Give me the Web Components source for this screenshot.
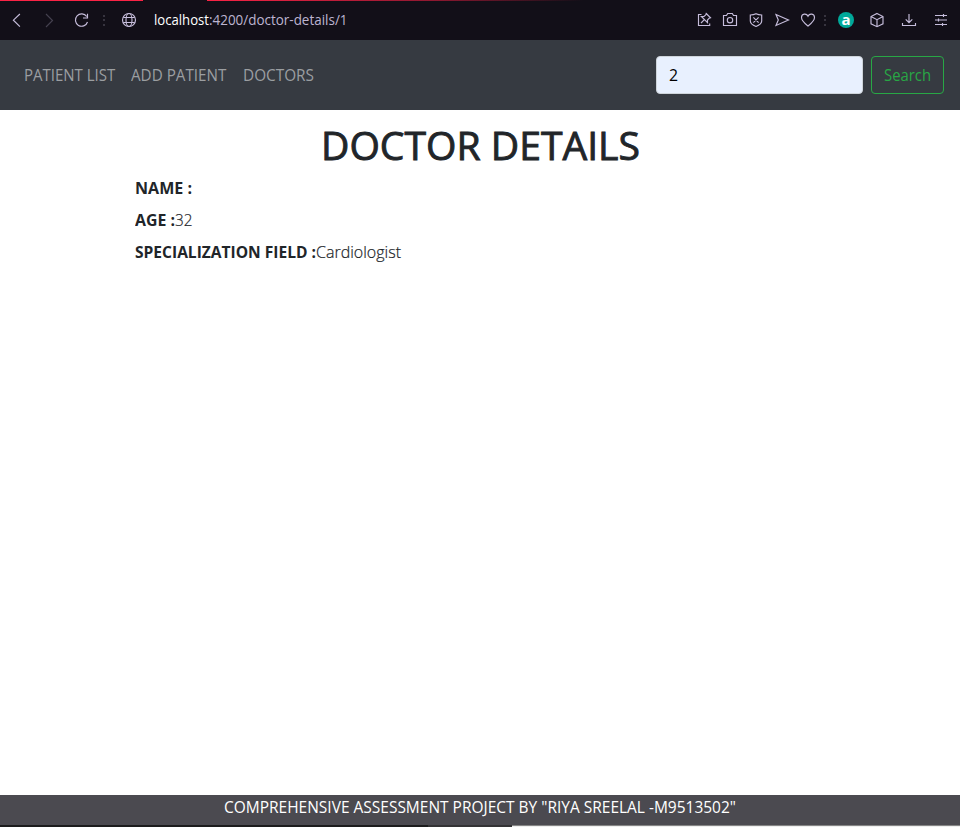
<!DOCTYPE html>
<html lang="en">
<head>
<meta charset="utf-8">
<title>Doctor Details</title>
<style>
html,body{margin:0;height:100%;background:#fff;overflow:hidden}
body{font:400 15.8px/24px "Open Sans","Noto Sans",sans-serif;color:#212529}
</style>
</head>
<body>
<clinic-app></clinic-app>
<script>
const define=(name,html,init)=>customElements.define(name,class extends HTMLElement{
  constructor(){super();this.attachShadow({mode:'open'}).innerHTML=html;}
  connectedCallback(){if(init)init.call(this,this.shadowRoot);}
});

/* A single line of text condensed to the width given in its "w" attribute. */
define('fit-text','<style>:host{display:inline-block;white-space:pre}span{display:inline-block;transform-origin:0 50%}</style><span><slot></slot></span>',function(root){
  const s=root.querySelector('span'),w=+this.getAttribute('w');
  const n=s.getBoundingClientRect().width;
  this.style.width=w+'px';
  if(n)s.style.transform='scaleX('+w/n+')';
});

const icons={
  back:'<path d="M12.9 4 6.400 10.200l6.500 6.500"/>',
  forward:'<path d="M7 4l6.500 6.500L7 17"/>',
  reload:'<path d="M15.700 6.500A6.200 6.200 0 1 0 16.500 12M16.500 3.700v4.300h-4.500"/>',
  globe:'<circle cx="10" cy="10" r="6.500"/><ellipse cx="10" cy="10" rx="3" ry="6.500"/><path d="M4.300 7.500h11.400M4.300 12.500h11.400"/>',
  pin:'<path d="M7.500 4.500h-3v11h11.200V13.500M12.200 3.500l4.300 4.300-1.300.4-1.700 1.800v2.600L7.400 6.500H10l1.800-1.700zM10.400 9.600 7 13"/>',
  camera:'<path d="M3.500 5.500h3l1.200-2h4.600l1.200 2h3v10h-13z"/><circle cx="10" cy="10.200" r="2.700"/>',
  shield:'<path d="M10 3.700c2 .9 3.700 1.200 5.700 1.300v6c0 2.600-2.700 4.300-5.700 5.500-3-1.200-5.700-2.900-5.700-5.500V5c2-.1 3.700-.4 5.700-1.300zM7.400 7.400l5.200 5.200M12.600 7.400l-5.200 5.200"/>',
  send:'<path d="M4 4.500 16.500 10 4 15.500 6.300 10z"/>',
  heart:'<path d="M10 16C7.500 14 3.500 11 3.500 7.500c0-4 5-4.500 6.500-1.300 1.500-3.200 6.500-2.700 6.500 1.300C16.500 11 12.500 14 10 16z"/>',
  cube:'<path d="M10 3.500l6 3v7.300l-6 2.900-6-2.900V6.500zM4 6.500l6 3.200 6-3.200M10 9.700v7"/>',
  download:'<path d="M10 4v8.500M6.700 9.300l3.300 3.400 3.300-3.400M3.500 13v2.500h13V13"/>',
  sliders:'<path d="M4 5.500h12M4 10h12M4 14.500h12M12.500 4v3M7.500 8.500v3M11.500 13v3"/>'
};
define('ui-icon','<style>:host{display:block;width:20px;height:20px;color:#c6bddb}svg{display:block}</style><svg width="20" height="20" viewBox="0 0 20 20" fill="none" stroke="currentColor" stroke-width="1.15"></svg>',function(root){
  root.querySelector('svg').innerHTML=icons[this.getAttribute('name')];
});
define('dot-divider','<style>:host{display:grid;width:2px;gap:2.5px}i{width:2px;height:2px;background:#37343f}</style><i></i><i></i><i></i>');

define('browser-bar',`<style>
:host{display:block;height:40px;background:#120f18;color:#bdb4d0;font-size:13.6px;line-height:20px}
.load{height:1px;display:grid;grid-template-columns:143px 64px 1fr}
.load b{background:#fa2345}.load b:last-child{background:linear-gradient(90deg,#fa2345,#8f1830 30%,#120f18 50%)}
.row{display:flex;align-items:center;height:38px;box-sizing:border-box;padding:0 9px 0 7px}
.globe{margin:0 15px 0 14px}em{font-style:normal;color:#fff}
.tools{display:flex;align-items:center;margin-left:auto}
.badge{width:16px;height:16px;border-radius:50%;background:#00a99a;color:#fff;text-align:center;font:700 15px/14px "Open Sans",sans-serif}
</style>
<div class="load"><b></b><span></span><b></b></div>
<div class="row">
<ui-icon name="back"></ui-icon><ui-icon name="forward" style="margin-left:12px;color:#45414f"></ui-icon><ui-icon name="reload" style="margin-left:12px"></ui-icon><dot-divider style="margin-left:12px"></dot-divider><ui-icon name="globe" class="globe"></ui-icon>
<fit-text w="55"><em>localhost</em></fit-text><fit-text w="138.500">:4200/doctor-details/1</fit-text>
<div class="tools"><ui-icon name="pin"></ui-icon><ui-icon name="camera" style="margin-left:6px"></ui-icon><ui-icon name="shield" style="margin-left:6px"></ui-icon><ui-icon name="send" style="margin-left:6px"></ui-icon><ui-icon name="heart" style="margin-left:6px"></ui-icon><dot-divider style="margin-left:6px"></dot-divider><div class="badge" style="margin-left:12px">a</div><ui-icon name="cube" style="margin-left:12.500px"></ui-icon><ui-icon name="download" style="margin-left:12px"></ui-icon><ui-icon name="sliders" style="margin-left:12.500px"></ui-icon></div>
</div>`);

define('nav-link','<style>:host{display:block;padding:0 8px;color:#9b9ea1}</style><slot></slot>');
define('search-form',`<style>
:host{display:flex;gap:8px}
input,button{box-sizing:border-box;height:38px;border-radius:4px;font:inherit;padding:6px 12px;margin:0}
input{width:207px;border:1px solid #ced4da;background:#e8f0fe;color:#000}
button{width:73px;border:1px solid #28a745;background:transparent;color:#28a745;text-align:left}
</style><input type="text" value="2" aria-label="Search"><button type="button"><fit-text w="47">Search</fit-text></button>`);
define('site-nav',`<style>
:host{display:flex;align-items:center;justify-content:space-between;height:70px;box-sizing:border-box;padding:16px;background:#363a41}
nav{display:flex}</style>
<nav><nav-link><fit-text w="91.300">PATIENT LIST</fit-text></nav-link><nav-link><fit-text w="95.300">ADD PATIENT</fit-text></nav-link><nav-link><fit-text w="71">DOCTORS</fit-text></nav-link></nav>
<search-form></search-form>`);

define('detail-row','<style>:host{display:flex;height:24px;font-weight:300;margin-bottom:8px;-webkit-text-stroke:.2px}::slotted([slot=label]){font-weight:700;-webkit-text-stroke:0}</style><slot name="label"></slot><slot></slot>');
define('doctor-details',`<style>
:host{display:block;padding:11px 135px 0}
h1{margin:0 0 7px;font-size:39.200px;line-height:48px;font-weight:500;text-align:center;-webkit-text-stroke:.9px}
</style>
<h1><fit-text w="319">DOCTOR DETAILS</fit-text></h1>
<detail-row><fit-text slot="label" w="57">NAME :</fit-text></detail-row>
<detail-row><fit-text slot="label" w="40">AGE :</fit-text><fit-text w="17.500">32</fit-text></detail-row>
<detail-row><fit-text slot="label" w="181">SPECIALIZATION FIELD :</fit-text><fit-text w="85">Cardiologist</fit-text></detail-row>`);
define('site-footer',`<style>
:host{display:block;height:32px;background:#4b4a50;color:#fff;text-align:center}
.text{height:30px}
.edge{height:2px;display:grid;grid-template-columns:428px 84px 1fr}
.edge i:nth-child(1){background:#1c1c1d}.edge i:nth-child(2){background:#333335}.edge i:nth-child(3){background:linear-gradient(#858585 50%,#eee 50%)}
</style><div class="text"><fit-text w="512">COMPREHENSIVE ASSESSMENT PROJECT BY "RIYA SREELAL -M9513502"</fit-text></div><div class="edge"><i></i><i></i><i></i></div>`);
define('clinic-app',`<style>:host{display:flex;flex-direction:column;height:827px;width:960px}doctor-details{flex:1}</style>
<browser-bar></browser-bar><site-nav></site-nav><doctor-details></doctor-details><site-footer></site-footer>`);
</script>
</body>
</html>
